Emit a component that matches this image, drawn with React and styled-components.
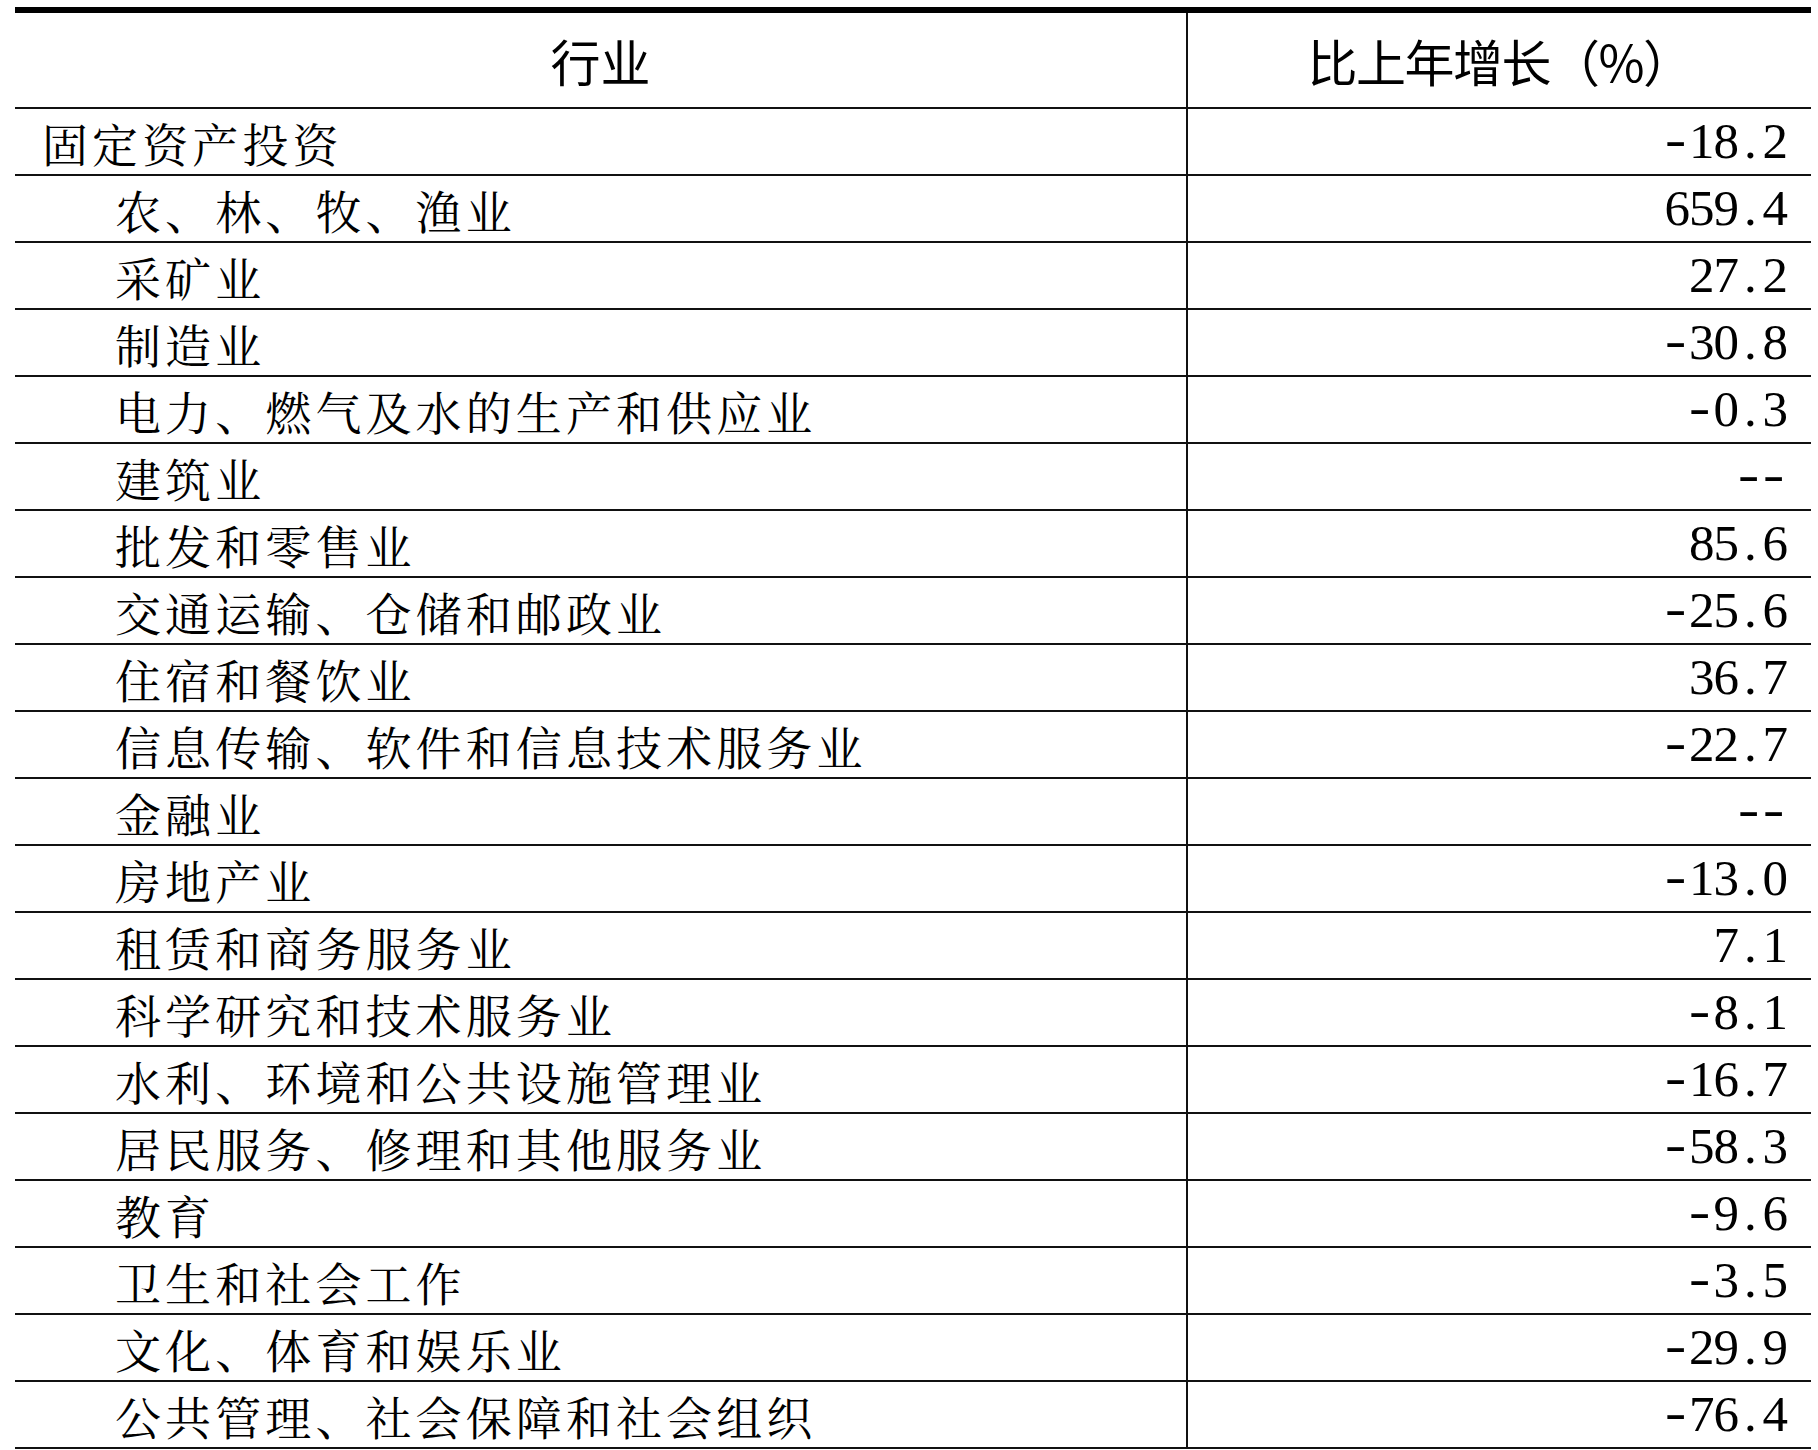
import React from "react";
import styled, { createGlobalStyle } from "styled-components";

const GlobalStyle = createGlobalStyle`
  html, body {
    margin: 0;
    padding: 0;
    background: #ffffff;
  }
  body {
    font-family: "Noto Serif CJK SC", "Noto Sans CJK SC", serif;
    color: #000;
  }
`;

const rows = [
  { name: "固定资产投资", value: "-18.2", level: 0 },
  { name: "农、林、牧、渔业", value: "659.4", level: 1 },
  { name: "采矿业", value: "27.2", level: 1 },
  { name: "制造业", value: "-30.8", level: 1 },
  { name: "电力、燃气及水的生产和供应业", value: "-0.3", level: 1 },
  { name: "建筑业", value: "--", level: 1 },
  { name: "批发和零售业", value: "85.6", level: 1 },
  { name: "交通运输、仓储和邮政业", value: "-25.6", level: 1 },
  { name: "住宿和餐饮业", value: "36.7", level: 1 },
  { name: "信息传输、软件和信息技术服务业", value: "-22.7", level: 1 },
  { name: "金融业", value: "--", level: 1 },
  { name: "房地产业", value: "-13.0", level: 1 },
  { name: "租赁和商务服务业", value: "7.1", level: 1 },
  { name: "科学研究和技术服务业", value: "-8.1", level: 1 },
  { name: "水利、环境和公共设施管理业", value: "-16.7", level: 1 },
  { name: "居民服务、修理和其他服务业", value: "-58.3", level: 1 },
  { name: "教育", value: "-9.6", level: 1 },
  { name: "卫生和社会工作", value: "-3.5", level: 1 },
  { name: "文化、体育和娱乐业", value: "-29.9", level: 1 },
  { name: "公共管理、社会保障和社会组织", value: "-76.4", level: 1 },
];

export default function App() {
  return (
    <>
      <GlobalStyle />
      <Table>
        <HeaderRow>
          <HeadCell $divider>行业</HeadCell>
          <HeadCell $tight>比上年增长（%）</HeadCell>
        </HeaderRow>
        {rows.map((row) => (
          <Row key={row.name}>
            <NameCell $level={row.level}>{row.name}</NameCell>
            <ValueCell>
              {row.value.split("").map((ch, i) => (
                <Glyph key={i} $dash={ch === "-"}>{ch}</Glyph>
              ))}
            </ValueCell>
          </Row>
        ))}
      </Table>
    </>
  );
}

const Table = styled.div`
  margin: 7px 7px 0 15px;
  width: 1796px;
  display: flex;
  flex-direction: column;
`;

const HeaderRow = styled.div`
  display: grid;
  grid-template-columns: 1173px 1fr;
  height: 102px;
  box-sizing: border-box;
  border-top: 6px solid #000;
  border-bottom: 2px solid #111;
`;

const HeadCell = styled.div`
  display: flex;
  align-items: center;
  justify-content: center;
  font-family: "Noto Sans CJK SC", sans-serif;
  font-weight: 400;
  font-size: 50px;
  letter-spacing: ${(p) => (p.$tight ? "-1.5px" : "0")};
  border-right: ${(p) => (p.$divider ? "2px solid #111" : "none")};
`;

const Row = styled.div`
  display: grid;
  grid-template-columns: 1173px 1fr;
  height: 67px;
  box-sizing: border-box;
  border-bottom: 2px solid #111;
`;

const NameCell = styled.div`
  display: flex;
  align-items: center;
  padding-left: ${(p) => (p.$level ? "100px" : "27px")};
  padding-top: 1px;
  border-right: 2px solid #111;
  font-size: 46px;
  line-height: 1;
  letter-spacing: 4.1px;
  white-space: nowrap;
`;

const ValueCell = styled.div`
  display: flex;
  align-items: center;
  justify-content: flex-end;
  padding-right: 24px;
  font-family: "Liberation Serif", serif;
  font-size: 51px;
  line-height: 1;
`;

const Glyph = styled.span`
  display: inline-block;
  width: 24.5px;
  text-align: ${(p) => (p.$dash ? "left" : "center")};
  transform: ${(p) => (p.$dash ? "scaleX(1.25) translateY(-2px)" : "none")};
  transform-origin: left center;
`;
